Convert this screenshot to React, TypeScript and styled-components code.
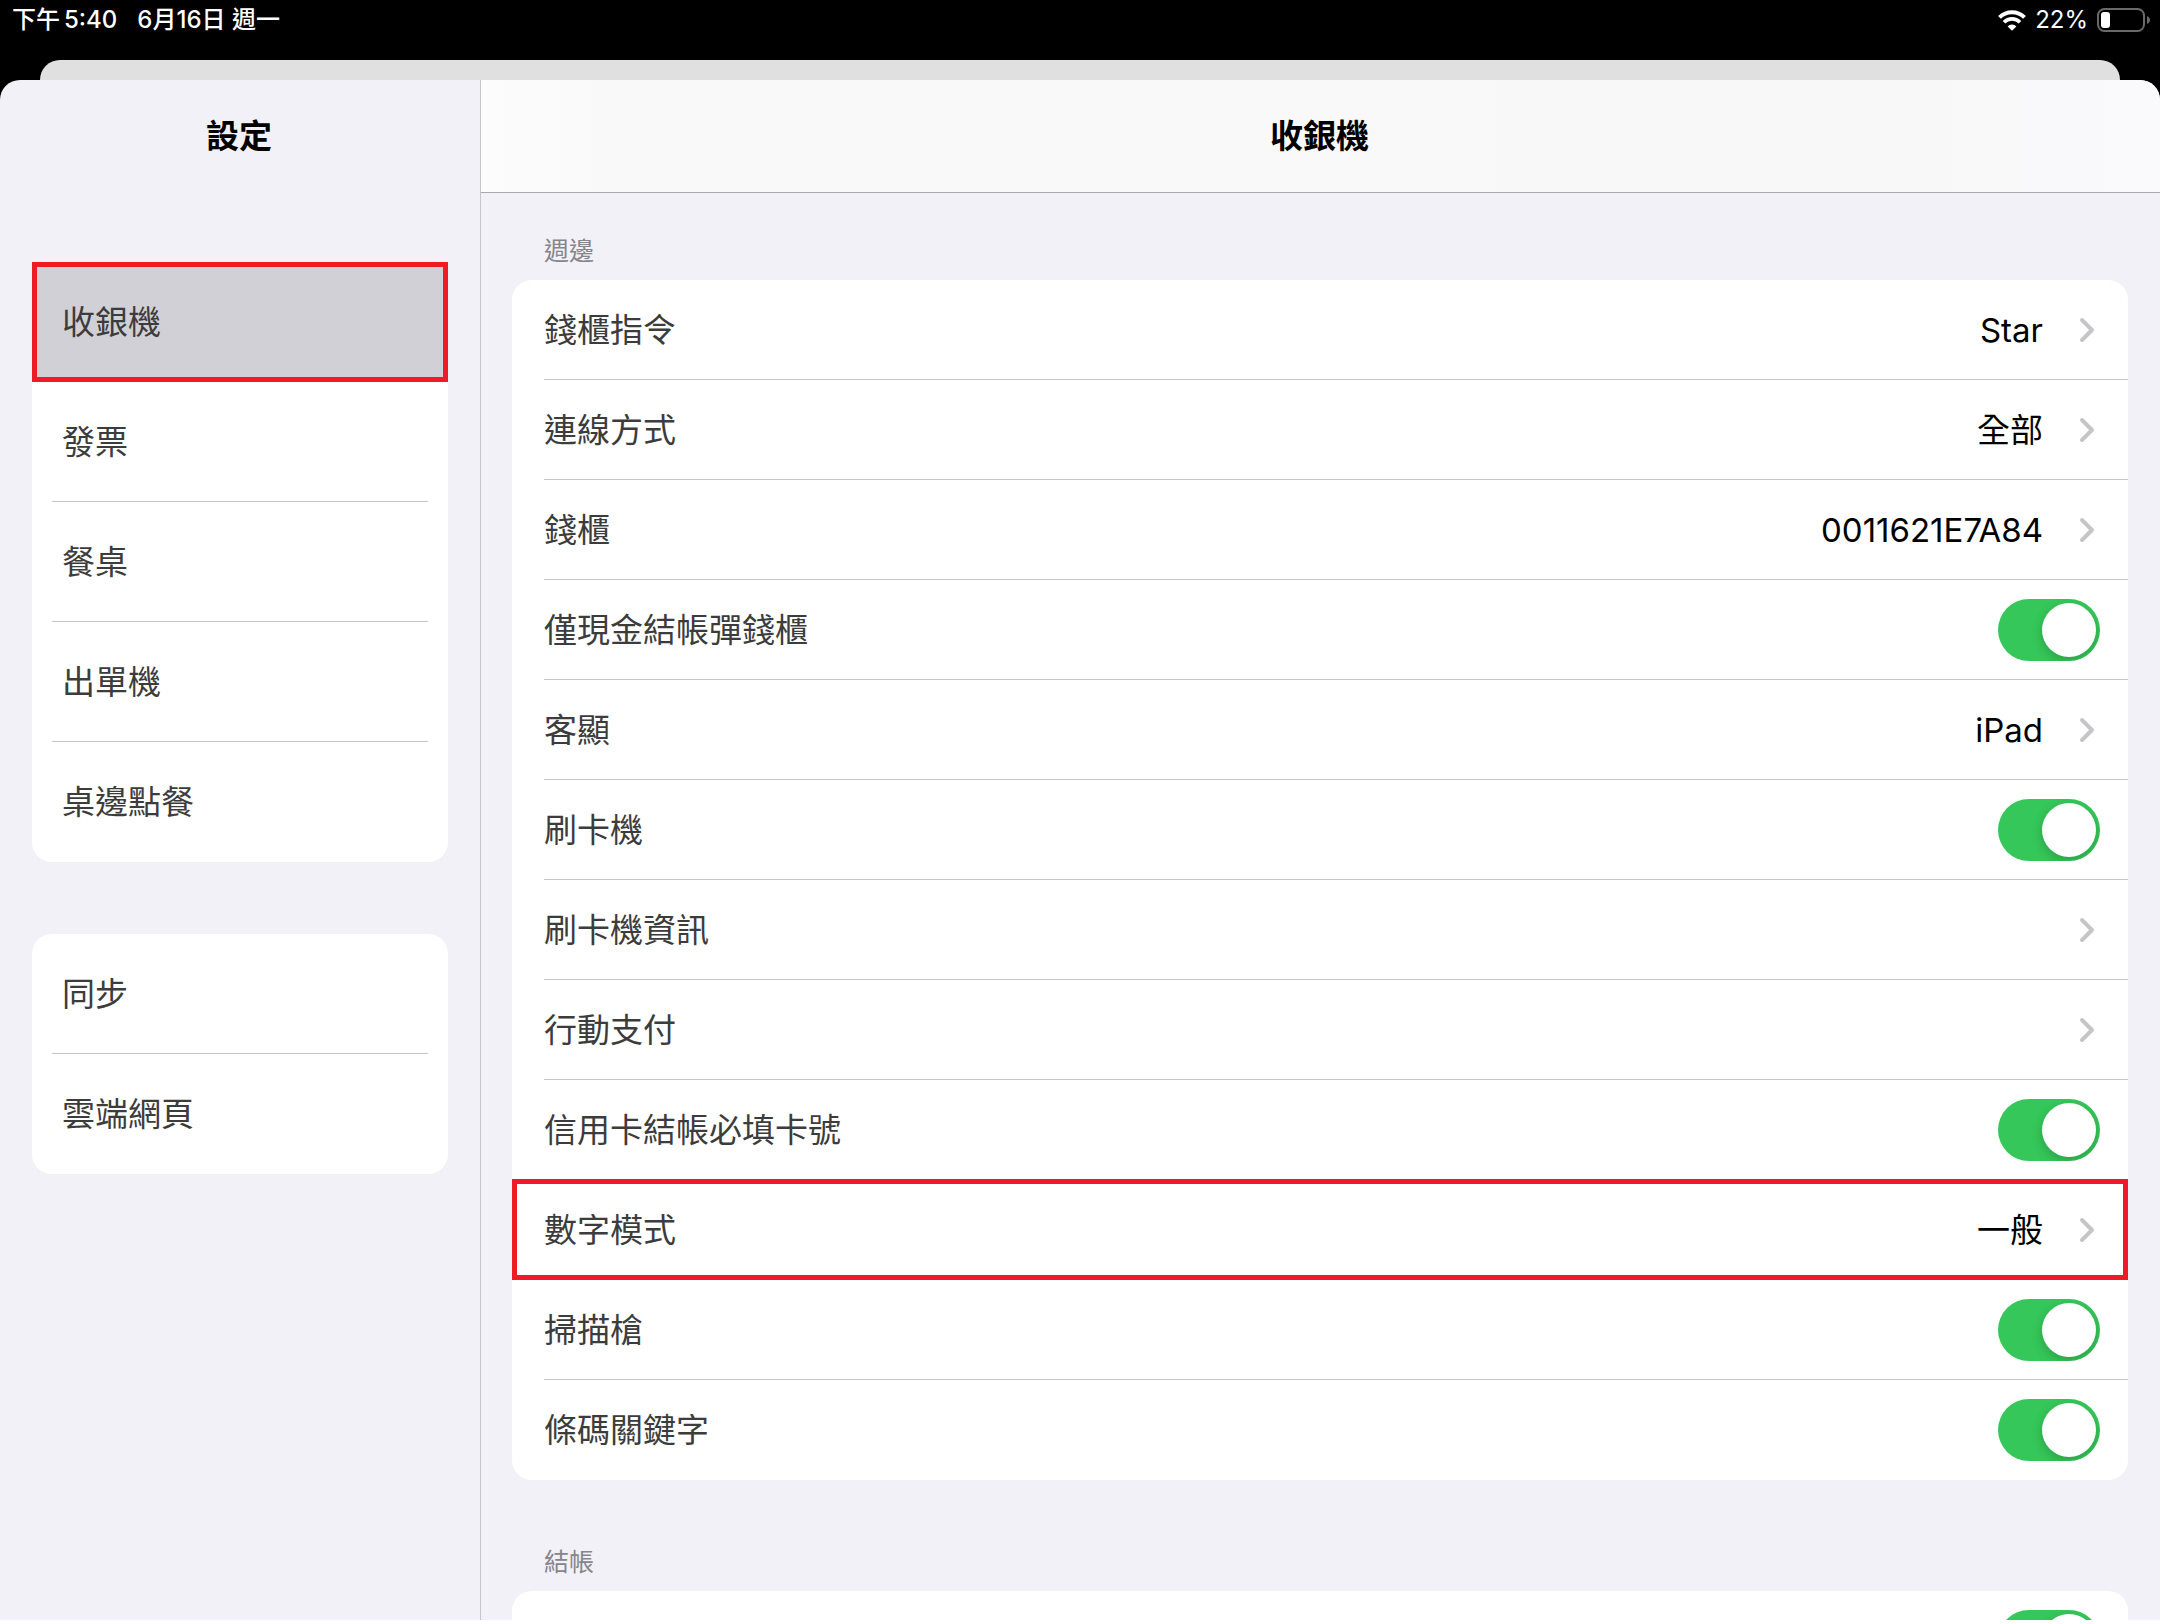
import React from "react";
import styled, { createGlobalStyle, css } from "styled-components";

const colors = {
  ink: "#3c3c3c",
  line: "#c6c6c8",
  surface: "#f2f1f7",
  mark: "#ed1c24",
  green: "#35c759",
};

const GlobalStyle = createGlobalStyle`
  *, *::before, *::after { box-sizing: border-box; }
  html, body { margin: 0; background: #fff; }
  body {
    font-family: Inter, "Noto Sans CJK TC", sans-serif;
    font-size: 33px;
    line-height: 48px;
    color: #000;
  }
  ul { list-style: none; margin: 0; padding: 0; }
  h1, h2 { margin: 0; font-size: 33px; line-height: 48px; font-weight: 600; }
  button { font: inherit; border: 0; margin: 0; background: none; cursor: pointer; }
`;

const Page = styled.div`
  height: 100vh;
  padding: 0 3px 4px 0;
`;

const Screen = styled.div`
  height: 100%;
  display: flex;
  flex-direction: column;
  overflow: hidden;
  background: #000;
`;

const StatusBar = styled.header`
  flex: none;
  height: 60px;
  padding: 0 10px 20px 12px;
  display: flex;
  align-items: center;
  justify-content: space-between;
  color: #fff;
  font-size: 24px;
  line-height: 40px;
  font-weight: 500;
`;

const StatusGroup = styled.div<{ $gap: number }>`
  display: flex;
  align-items: center;
  gap: ${(p) => p.$gap}px;
`;

const Percent = styled.span`
  font-weight: 400;
`;

const BackSheet = styled.div`
  flex: none;
  height: 20px;
  margin: 0 40px;
  border-radius: 20px 20px 0 0;
  background: #e0e0e0;
`;

const Sheet = styled.div`
  flex: 1;
  min-height: 0;
  display: flex;
  overflow: hidden;
  border-radius: 20px 20px 0 0;
  background: ${colors.surface};
`;

const Sidebar = styled.nav`
  flex: none;
  width: 481px;
  border-right: 1px solid ${colors.line};
`;

const TitleBar = styled.div<{ $framed?: boolean }>`
  height: 113px;
  padding-right: 2px;
  display: flex;
  align-items: center;
  justify-content: center;
  border-bottom: 1px solid transparent;
  ${(p) =>
    p.$framed &&
    css`
      border-color: #a9a8ad;
      background: linear-gradient(90deg, #fcfcfd, #f9f9f9 8%, #f8f8f8 85%, #fafafd);
    `}
`;

const SideGroups = styled.div`
  padding: 69px 32px 0;
  display: flex;
  flex-direction: column;
  gap: 72px;
`;

const Card = styled.ul`
  border-radius: 20px;
  background: #fff;
`;

const markFrame = css`
  &::after {
    content: "";
    position: absolute;
    inset: -1px 0 0;
    border: 5px solid ${colors.mark};
    pointer-events: none;
  }
`;

const SideItem = styled.li<{ $selected?: boolean }>`
  height: 120px;
  display: flex;
  flex-direction: column;
  ${(p) =>
    p.$selected
      ? css`
          background: #d1d0d6;
          border: 5px solid ${colors.mark};
          padding: 0 15px;
        `
      : css`
          padding: 0 20px;
          &:not(:last-child) > button {
            border-bottom: 1px solid ${colors.line};
          }
        `}
`;

const SideButton = styled.button`
  flex: 1;
  padding: 0 10px;
  text-align: left;
  color: ${colors.ink};
`;

const Main = styled.main`
  flex: 1;
  min-width: 0;
`;

const Sections = styled.div`
  padding: 38px 32px 0 31px;
  display: flex;
  flex-direction: column;
  gap: 62px;
`;

const SectionTitle = styled.h2`
  padding: 0 32px 9px;
  font-size: 25px;
  line-height: 40px;
  font-weight: 400;
  color: #86858a;
`;

const Row = styled.li<{ $marked?: boolean }>`
  position: relative;
  height: 100px;
  padding-left: 32px;
  display: flex;
  &:not(:last-child) > * {
    border-bottom: 1px solid ${colors.line};
  }
  ${(p) => p.$marked && markFrame}
`;

const rowBody = css`
  flex: 1;
  display: flex;
  align-items: center;
  justify-content: space-between;
  color: ${colors.ink};
`;

const LinkRow = styled.button`
  ${rowBody}
  padding: 0 33px 0 0;
`;

const ToggleRow = styled.label`
  ${rowBody}
  padding-right: 28px;
`;

const Trailing = styled.span`
  display: flex;
  align-items: center;
  gap: 36px;
  color: #000;
`;

const Switch = styled.input`
  appearance: none;
  flex: none;
  margin: 0 0 0 auto;
  width: 102px;
  height: 62px;
  padding: 4px;
  display: flex;
  border-radius: 31px;
  background: #e9e9ea;
  overflow: hidden;
  cursor: pointer;
  &::before {
    content: "";
    width: 54px;
    height: 54px;
    border-radius: 50%;
    background: #fff;
    box-shadow: 0 4px 12px rgba(0, 0, 0, 0.2);
  }
  &:checked {
    justify-content: flex-end;
    background: ${colors.green};
  }
`;

const Chevron = () => (
  <svg width="16" height="26" viewBox="0 0 16 26" fill="none" aria-hidden="true">
    <path d="M3 3 L13 13 L3 23" stroke="#c5c5c7" strokeWidth="4" strokeLinecap="round" strokeLinejoin="round" />
  </svg>
);

const Wifi = () => (
  <svg width="28" height="21" viewBox="0 0 28 21" fill="none" aria-label="Wi-Fi">
    <path d="M1.500 7.400 A17.800 17.800 0 0 1 26.500 7.400" stroke="#fff" strokeWidth="3.9" />
    <path d="M6 12.200 A11.400 11.400 0 0 1 22 12.200" stroke="#fff" strokeWidth="3.7" />
    <path d="M14 20.800 L9.600 16.400 A6.200 6.200 0 0 1 18.400 16.400 Z" fill="#fff" />
  </svg>
);

const Battery = () => (
  <svg width="53" height="24" viewBox="0 0 53 24" fill="none" aria-hidden="true">
    <rect x="1" y="1" width="46" height="22" rx="6.5" stroke="#6a6a6a" strokeWidth="2" />
    <rect x="4" y="4" width="9" height="16" rx="3" fill="#fff" />
    <path d="M50 8 C54 9.500 54 14.500 50 16 Z" fill="#6a6a6a" />
  </svg>
);

type Item = { label: string; value?: string; toggle?: boolean; marked?: boolean };

const sideGroups = [
  ["收銀機", "發票", "餐桌", "出單機", "桌邊點餐"],
  ["同步", "雲端網頁"],
];

const sections: { title: string; items: Item[] }[] = [
  {
    title: "週邊",
    items: [
      { label: "錢櫃指令", value: "Star" },
      { label: "連線方式", value: "全部" },
      { label: "錢櫃", value: "0011621E7A84" },
      { label: "僅現金結帳彈錢櫃", toggle: true },
      { label: "客顯", value: "iPad" },
      { label: "刷卡機", toggle: true },
      { label: "刷卡機資訊" },
      { label: "行動支付" },
      { label: "信用卡結帳必填卡號", toggle: true },
      { label: "數字模式", value: "一般", marked: true },
      { label: "掃描槍", toggle: true },
      { label: "條碼關鍵字", toggle: true },
    ],
  },
  { title: "結帳", items: [{ label: "", toggle: true }] },
];

const SettingRow = ({ item, section }: { item: Item; section: string }) => (
  <Row $marked={item.marked}>
    {item.toggle ? (
      <ToggleRow>
        {item.label}
        <Switch type="checkbox" defaultChecked aria-label={item.label || section} />
      </ToggleRow>
    ) : (
      <LinkRow type="button">
        {item.label}
        <Trailing>
          {item.value}
          <Chevron />
        </Trailing>
      </LinkRow>
    )}
  </Row>
);

export default function App() {
  return (
    <Page lang="zh-Hant">
      <GlobalStyle />
      <Screen>
        <StatusBar>
          <StatusGroup $gap={20}>
            <StatusGroup $gap={4}>
              <span>下午</span>
              <span>5:40</span>
            </StatusGroup>
            <span>6月16日 週一</span>
          </StatusGroup>
          <StatusGroup $gap={9}>
            <Wifi />
            <Percent>22%</Percent>
            <Battery />
          </StatusGroup>
        </StatusBar>
        <BackSheet />
        <Sheet>
          <Sidebar>
            <TitleBar>
              <h1>設定</h1>
            </TitleBar>
            <SideGroups>
              {sideGroups.map((group) => (
                <Card key={group[0]}>
                  {group.map((label) => (
                    <SideItem key={label} $selected={label === "收銀機"}>
                      <SideButton type="button">{label}</SideButton>
                    </SideItem>
                  ))}
                </Card>
              ))}
            </SideGroups>
          </Sidebar>
          <Main>
            <TitleBar $framed>
              <h1>收銀機</h1>
            </TitleBar>
            <Sections>
              {sections.map((section) => (
                <section key={section.title}>
                  <SectionTitle>{section.title}</SectionTitle>
                  <Card>
                    {section.items.map((item) => (
                      <SettingRow key={item.label} item={item} section={section.title} />
                    ))}
                  </Card>
                </section>
              ))}
            </Sections>
          </Main>
        </Sheet>
      </Screen>
    </Page>
  );
}
